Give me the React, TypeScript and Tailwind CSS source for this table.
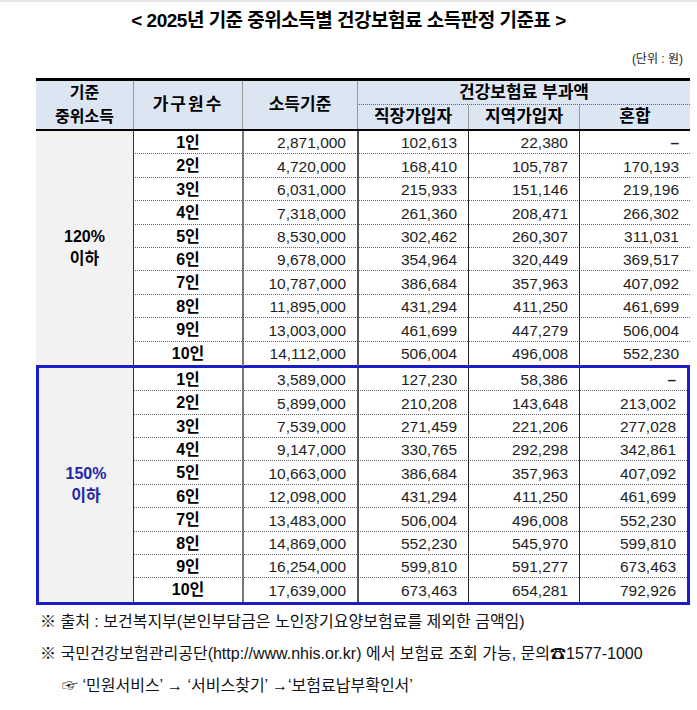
import React from "react";

const sec1 = [
  ["1인", "2,871,000", "102,613", "22,380", "–"],
  ["2인", "4,720,000", "168,410", "105,787", "170,193"],
  ["3인", "6,031,000", "215,933", "151,146", "219,196"],
  ["4인", "7,318,000", "261,360", "208,471", "266,302"],
  ["5인", "8,530,000", "302,462", "260,307", "311,031"],
  ["6인", "9,678,000", "354,964", "320,449", "369,517"],
  ["7인", "10,787,000", "386,684", "357,963", "407,092"],
  ["8인", "11,895,000", "431,294", "411,250", "461,699"],
  ["9인", "13,003,000", "461,699", "447,279", "506,004"],
  ["10인", "14,112,000", "506,004", "496,008", "552,230"],
];

const sec2 = [
  ["1인", "3,589,000", "127,230", "58,386", "–"],
  ["2인", "5,899,000", "210,208", "143,648", "213,002"],
  ["3인", "7,539,000", "271,459", "221,206", "277,028"],
  ["4인", "9,147,000", "330,765", "292,298", "342,861"],
  ["5인", "10,663,000", "386,684", "357,963", "407,092"],
  ["6인", "12,098,000", "431,294", "411,250", "461,699"],
  ["7인", "13,483,000", "506,004", "496,008", "552,230"],
  ["8인", "14,869,000", "552,230", "545,970", "599,810"],
  ["9인", "16,254,000", "599,810", "591,277", "673,463"],
  ["10인", "17,639,000", "673,463", "654,281", "792,926"],
];

const FONT = { fontFamily: '"Liberation Sans", "Noto Sans CJK KR", sans-serif' };

function Section({ rows, label, blue }: { rows: string[][]; label: string; blue?: boolean }) {
  return (
    <div className={blue ? "flex border-[3px] border-[#1c1cc8]" : "flex"}>
      <div
        className={
          (blue ? "w-[94px] text-[#1f26a6] " : "w-[97px] text-black ") +
          "shrink-0 bg-[#f2f2f2] flex flex-col items-center justify-center text-[16px] font-bold leading-[22px]"
        }
      >
        <span>{label}</span>
        <span>이하</span>
      </div>
      <div className="flex-1">
        {rows.map((r, i) => (
          <div
            key={i}
            className={
              "grid grid-cols-[109px_115px_111px_111px_1fr] h-[23.4px] " +
              (i < 9 ? "border-b border-dotted border-[#666]" : "")
            }
          >
            <div className="border-l border-[#333] flex items-center justify-center text-[16px] font-bold text-black">
              {r[0]}
            </div>
            <div className="border-l-2 border-[#777] flex items-center justify-end pr-[11px] text-[15.5px] text-[#1e1e1e]">
              {r[1]}
            </div>
            <div className="border-l-2 border-[#555] flex items-center justify-end pr-[11px] text-[15.5px] text-[#1e1e1e]">
              {r[2]}
            </div>
            <div className="border-l border-[#222] flex items-center justify-end pr-[11px] text-[15.5px] text-[#1e1e1e]">
              {r[3]}
            </div>
            <div
              className={
                "border-l border-[#222] flex items-center justify-end pr-[11px] text-[15.5px] text-[#1e1e1e] " +
                (r[4] === "–" ? "font-bold" : "")
              }
            >
              {r[4]}
            </div>
          </div>
        ))}
      </div>
    </div>
  );
}

export default function App() {
  return (
    <div className="w-[697px] h-[710px] bg-white text-black overflow-hidden" style={FONT}>
      <div className="h-[2px] bg-[#e6e6e6]" />
      <div className="pt-[7px] h-[33px] text-center text-[19px] font-bold leading-[24px] tracking-[-0.5px]">
        &lt; 2025년 기준 중위소득별 건강보험료 소득판정 기준표 &gt;
      </div>
      <div className="mt-[16px] pr-[14px] text-right text-[12px] leading-[16px] text-[#222]">(단위 : 원)</div>

      <div className="mt-[11px] ml-[36px] w-[654px]">
        {/* header */}
        <div className="border-t-[3px] border-b-2 border-black bg-[#dce6f2] grid grid-cols-[97px_109px_115px_111px_111px_1fr] grid-rows-[24px_24px] text-[17px] font-bold text-black">
          <div className="row-span-2 flex flex-col items-center justify-center leading-[24px] text-[16px]">
            <span>기준</span>
            <span>중위소득</span>
          </div>
          <div className="row-span-2 border-l border-[#9a9a9a] flex items-center justify-center tracking-[2px]">
            가구원수
          </div>
          <div className="row-span-2 border-l border-[#9a9a9a] flex items-center justify-center">소득기준</div>
          <div className="col-span-3 border-l border-b border-[#9a9a9a] border-b-[#666] [border-bottom-style:dotted] flex items-center justify-center">
            건강보험료 부과액
          </div>
          <div className="border-l border-[#9a9a9a] flex items-center justify-center">직장가입자</div>
          <div className="border-l border-[#9a9a9a] flex items-center justify-center">지역가입자</div>
          <div className="border-l border-[#9a9a9a] flex items-center justify-center">혼합</div>
        </div>
        <Section rows={sec1} label="120%" />
        <Section rows={sec2} label="150%" blue />
      </div>

      <div className="mt-[1px] pl-[40px] text-[16px] leading-[32px] text-[#111]">
        <div>※ 출처 : 보건복지부(본인부담금은 노인장기요양보험료를 제외한 금액임)</div>
        <div>
          ※ 국민건강보험관리공단(http://www.nhis.or.kr) 에서 보험료 조회 가능, 문의<span className="font-bold">☎</span>1577-1000
        </div>
        <div className="pl-[22px]">☞ ‘민원서비스’ → ‘서비스찾기’ →‘보험료납부확인서’</div>
      </div>
    </div>
  );
}
